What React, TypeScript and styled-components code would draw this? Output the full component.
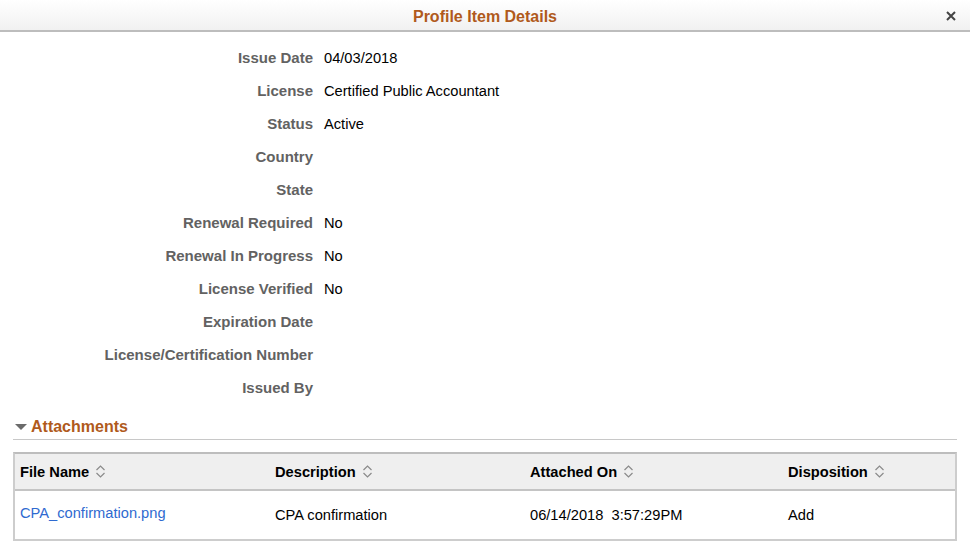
import React from "react";
import styled, { createGlobalStyle } from "styled-components";

const Global = createGlobalStyle`
  html, body { margin: 0; padding: 0; background: #fff; }
  body { font-family: "Liberation Sans", Arial, sans-serif; }
`;

const Page = styled.div`
  width: 970px;
  height: 547px;
  background: #fff;
  overflow: hidden;
  display: flex;
  flex-direction: column;
`;

const Header = styled.div`
  height: 30px;
  flex: 0 0 auto;
  background: linear-gradient(#ffffff, #f1f1f1);
  border-bottom: 2px solid #bdbdbd;
  display: flex;
  align-items: center;
  justify-content: center;
  position: relative;
`;

const Title = styled.h1`
  margin: 3px 0 0 0;
  font-size: 16px;
  font-weight: bold;
  color: #b05a1c;
`;

const Close = styled.button`
  position: absolute;
  right: 13px;
  top: 10px;
  border: 0;
  background: transparent;
  padding: 0;
  width: 12px;
  height: 12px;
  display: flex;
  align-items: center;
  justify-content: center;
`;

const Fields = styled.div`
  display: grid;
  grid-template-columns: 313px 1fr;
  column-gap: 11px;
  padding-top: 10px;
`;

const Label = styled.div`
  height: 33px;
  line-height: 31px;
  text-align: right;
  font-size: 15px;
  font-weight: bold;
  color: #626262;
`;

const Value = styled.div`
  height: 33px;
  line-height: 33px;
  font-size: 14.67px;
  color: #000;
`;

const Section = styled.div`
  margin: 9px 13px 0 13px;
`;

const SectionHead = styled.div`
  display: flex;
  align-items: center;
  gap: 4px;
  height: 25px;
  padding-left: 2px;
  border-bottom: 1px solid #c8c8c8;
`;

const SectionTitle = styled.span`
  font-size: 16px;
  font-weight: bold;
  color: #b05a1c;
`;

const Table = styled.div`
  margin-top: 12px;
  border: 2px solid #cdcdcd;
  border-top-color: #bdbdbd;
`;

const Row = styled.div<{ $head?: boolean }>`
  display: grid;
  grid-template-columns: 255px 255px 258px 1fr;
  height: ${(p) => (p.$head ? 35 : 48)}px;
  align-items: center;
  background: ${(p) => (p.$head ? "#efefef" : "#fff")};
  border-bottom: ${(p) => (p.$head ? "2px solid #c4c4c4" : "none")};
  padding-left: 5px;
`;

const HeadCell = styled.div`
  font-size: 14.67px;
  font-weight: bold;
  color: #000;
  display: flex;
  align-items: center;
  gap: 6px;
`;

const Cell = styled.div<{ $up?: boolean }>`
  font-size: 14.67px;
  color: #000;
  white-space: pre;
  position: relative;
  top: ${(p) => (p.$up ? -2 : 0)}px;
`;

const Link = styled.a`
  color: #2f6ad0;
  text-decoration: none;
  font-size: 14.67px;
`;

const SortIcon = () => (
  <svg width="11" height="13" viewBox="0 0 11 13">
    <path d="M1.5 5 L5.5 1 L9.5 5" fill="none" stroke="#8a8a8a" strokeWidth="1.2" />
    <path d="M1.5 8 L5.5 12 L9.5 8" fill="none" stroke="#8a8a8a" strokeWidth="1.2" />
  </svg>
);

const fields: [string, string][] = [
  ["Issue Date", "04/03/2018"],
  ["License", "Certified Public Accountant"],
  ["Status", "Active"],
  ["Country", ""],
  ["State", ""],
  ["Renewal Required", "No"],
  ["Renewal In Progress", "No"],
  ["License Verified", "No"],
  ["Expiration Date", ""],
  ["License/Certification Number", ""],
  ["Issued By", ""],
];

export default function App() {
  return (
    <Page>
      <Global />
      <Header>
        <Title>Profile Item Details</Title>
        <Close aria-label="Close">
          <svg width="10" height="10" viewBox="0 0 10 10">
            <path d="M1 1 L9 9 M9 1 L1 9" stroke="#444" strokeWidth="2" />
          </svg>
        </Close>
      </Header>
      <Fields>
        {fields.map(([l, v]) => (
          <React.Fragment key={l}>
            <Label>{l}</Label>
            <Value>{v}</Value>
          </React.Fragment>
        ))}
      </Fields>
      <Section>
        <SectionHead>
          <svg width="12" height="8" viewBox="0 0 12 8">
            <path d="M0 1 L12 1 L6 7 Z" fill="#6b6b6b" />
          </svg>
          <SectionTitle>Attachments</SectionTitle>
        </SectionHead>
        <Table>
          <Row $head>
            <HeadCell>File Name <SortIcon /></HeadCell>
            <HeadCell>Description <SortIcon /></HeadCell>
            <HeadCell>Attached On <SortIcon /></HeadCell>
            <HeadCell>Disposition <SortIcon /></HeadCell>
          </Row>
          <Row>
            <Cell $up><Link href="#">CPA_confirmation.png</Link></Cell>
            <Cell>CPA confirmation</Cell>
            <Cell>{"06/14/2018  3:57:29PM"}</Cell>
            <Cell>Add</Cell>
          </Row>
        </Table>
      </Section>
    </Page>
  );
}
